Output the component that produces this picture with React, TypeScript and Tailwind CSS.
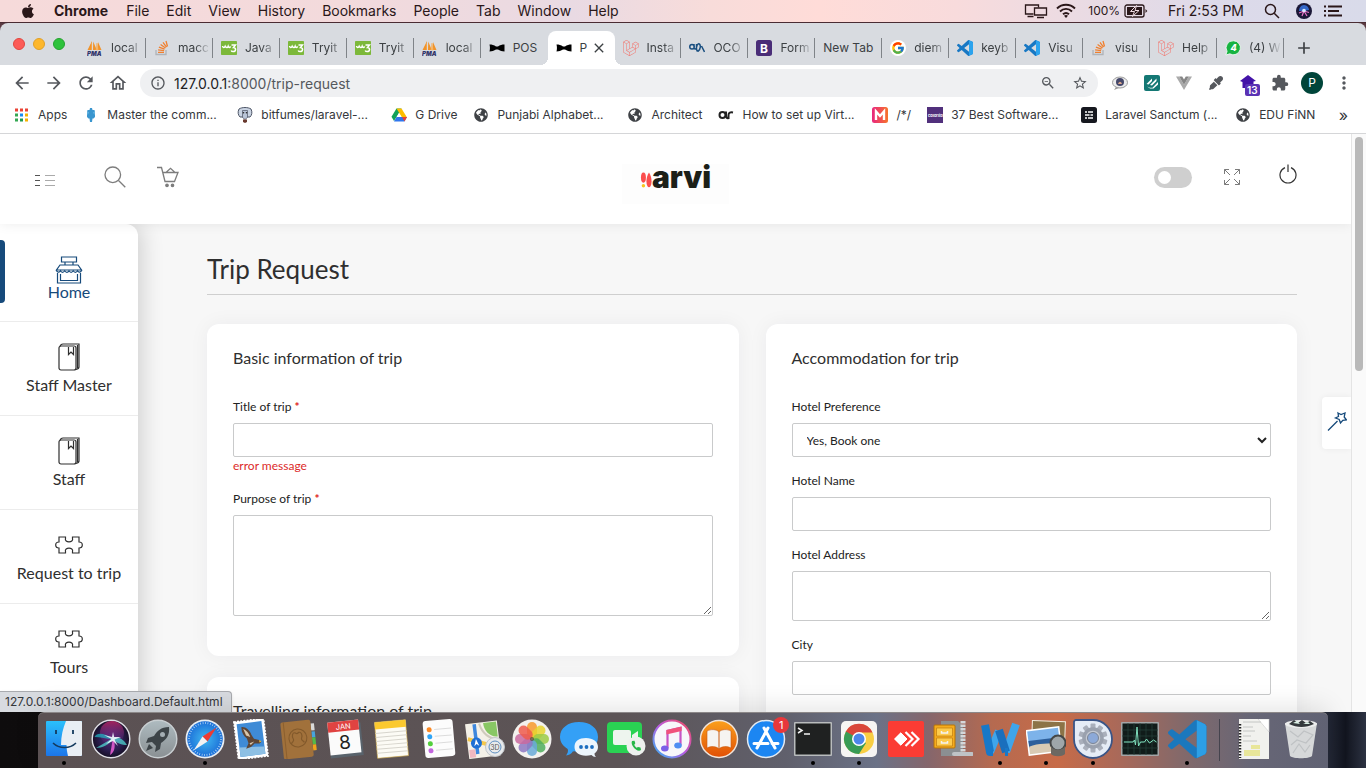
import React from "react";
import { FaApple, FaLaravel, FaEyeDropper, FaGlobeAmericas } from "react-icons/fa";
import { FcGoogle } from "react-icons/fc";
import {
  MdArrowBack,
  MdArrowForward,
  MdRefresh,
  MdOutlineHome,
  MdInfoOutline,
  MdZoomOut,
  MdStarBorder,
  MdMoreVert,
  MdExtension,
  MdAdd,
  MdClose,
} from "react-icons/md";

/* ---------- Small favicons ---------- */

const VSCODE_PATH =
  "M23.15 2.587L18.21.21a1.494 1.494 0 0 0-1.705.29l-9.46 8.63-4.12-3.128a.999.999 0 0 0-1.276.057L.327 7.261A1 1 0 0 0 .326 8.74L3.899 12 .326 15.26a1 1 0 0 0 .001 1.479L1.65 17.94a.999.999 0 0 0 1.276.057l4.12-3.128 9.46 8.63a1.492 1.492 0 0 0 1.704.29l4.942-2.377A1.5 1.5 0 0 0 24 20.06V3.939a1.5 1.5 0 0 0-.85-1.352zm-5.146 14.861L10.826 12l7.178-5.448v10.896z";

function PmaIcon() {
  return (
    <svg viewBox="0 0 16 16" className="size-4">
      <path d="M5 1 .5 10H5zM6.200 1.500 6 10h3.800zM11 2l-.5 8h4z" fill="#f0932b" />
      <path d="M4.500 3v7M10 3l1 7H9z" stroke="#f6b05e" strokeWidth=".6" fill="#f9b661" />
      <text x="0" y="15.500" fontSize="6" fontWeight="900" fontStyle="italic" fontFamily="Inter, sans-serif" fill="#33366b">
        PMA
      </text>
    </svg>
  );
}

function StackIcon() {
  return (
    <svg viewBox="0 0 16 16" className="size-4" fill="none">
      <path d="M2 10v4.500h10V10" stroke="#b0b3b8" strokeWidth="1.300" />
      <path d="M4 12.300h6M4.100 9.900l6 .8M4.900 7.200l5.700 2M6.600 4.500l4.900 3.500M9 2.300l3.500 4.800M12 1l1.500 5.500" stroke="#f08030" strokeWidth="1.300" />
    </svg>
  );
}

function W3Icon() {
  return (
    <svg viewBox="0 0 16 16" className="size-4">
      <rect y="1" width="16" height="14" rx=".8" fill="#7cb83a" />
      <path d="M1.500 6c.3 2 2 2 2.700.3C5 8 6.600 8 7.200 6.200c.6 1.700 2 1.500 2.400.2" stroke="#fff" strokeWidth="1.500" fill="none" />
      <path d="M10.500 5h4l-2 2.600c3 0 2.500 4-.3 4-1 0-1.700-.4-2-1.200" stroke="#fff" strokeWidth="1.500" fill="none" />
    </svg>
  );
}

function BowIcon() {
  return (
    <svg viewBox="0 0 16 16" className="size-4">
      <path d="M.5 4.500C3 4.500 5 5 7 6.500h2C11 5 13 4.500 15.500 4.500v7c-2.500 0-4.500-.7-6.500-2H7c-2 1.300-4 2-6.500 2 .6-2.500.6-4.500 0-7z" fill="#000" />
    </svg>
  );
}

function OcoIcon() {
  return (
    <svg viewBox="0 0 16 16" className="size-4" fill="none" stroke="#1a4f80" strokeWidth="1.500">
      <path d="M3 4.500c-3 0-3 4.500 0 4.500s3-4.500 0-4.500zM5 4v3.500c0 2 2.500 2 2.500 0V4M9.500 3.500c-2.500 2-2.500 6-1 8M9.500 3.500c3 1 2 6-.5 8M12.500 6l3 6" />
    </svg>
  );
}

function BootIcon() {
  return (
    <svg viewBox="0 0 16 16" className="size-4">
      <rect width="16" height="16" rx="2.500" fill="#4a2d78" />
      <text x="4" y="12.500" fontSize="12" fontWeight="700" fontFamily="Inter, sans-serif" fill="#fff">B</text>
    </svg>
  );
}

function CodeIcon() {
  return (
    <svg viewBox="0 0 24 24" className="size-4">
      <path d={VSCODE_PATH} fill="#1878c4" />
      <path d="M18 .2 23.200 2.600 24 4v16l-.8 1.400L18 23.800z" fill="#2ba3ee" />
    </svg>
  );
}

function ChatBadgeIcon() {
  return (
    <svg viewBox="0 0 16 16" className="size-4">
      <path d="M8.500.8a7 7 0 1 1-3.700 13L.8 15l1.300-3.600A7 7 0 0 1 8.500.8z" fill="#17b341" stroke="#fff" strokeWidth=".8" />
      <text x="5.500" y="11.300" fontSize="9" fontWeight="800" fontStyle="italic" fontFamily="Inter, sans-serif" fill="#fff">4</text>
    </svg>
  );
}

function GoogleIcon() {
  return (
    <span className="flex size-4 items-center justify-center rounded-full bg-white">
      <FcGoogle className="size-3.5" />
    </span>
  );
}

type Tab = { text: string; icon?: React.ReactNode; active?: boolean; noLine?: boolean };

const tabs: Tab[] = [
  { text: "local", icon: <PmaIcon /> },
  { text: "macc", icon: <StackIcon /> },
  { text: "Java", icon: <W3Icon /> },
  { text: "Tryit", icon: <W3Icon /> },
  { text: "Tryit", icon: <W3Icon /> },
  { text: "local", icon: <PmaIcon /> },
  { text: "POS", icon: <BowIcon />, noLine: true },
  { text: "P", icon: <BowIcon />, active: true, noLine: true },
  { text: "Insta", icon: <FaLaravel className="size-4 text-[#f3736b]" /> },
  { text: "OCO", icon: <OcoIcon /> },
  { text: "Form", icon: <BootIcon /> },
  { text: "New Tab" },
  { text: "diem", icon: <GoogleIcon /> },
  { text: "keyb", icon: <CodeIcon /> },
  { text: "Visu", icon: <CodeIcon /> },
  { text: "visu", icon: <StackIcon /> },
  { text: "Help", icon: <FaLaravel className="size-4 text-[#f3736b]" /> },
  { text: "(4) W", icon: <ChatBadgeIcon /> },
];

/* ---------- Menu bar ---------- */

const menus = ["File", "Edit", "View", "History", "Bookmarks", "People", "Tab", "Window", "Help"];

function MenuBar() {
  return (
    <header className="flex h-[23px] shrink-0 items-center border-b border-[#4a2c33] bg-[linear-gradient(90deg,#f6dada_0%,#f3dadc_25%,#e9dae3_42%,#f8dcda_52%,#ffdcd8_60%,#f8dbdc_70%,#e9dbe4_80%,#dcdaea_90%,#d9dbea_100%)] pr-6 pl-5 text-sm leading-none text-[#2a1719]">
      <button aria-label="Apple menu" className="mr-[18px]"><FaApple className="size-4" /></button>
      <nav className="flex gap-[17px]">
        <button className="mr-px font-bold">Chrome</button>
        {menus.map((m) => (
          <button key={m}>{m}</button>
        ))}
      </nav>
      <div className="ml-auto flex items-center">
        <svg viewBox="0 0 24 16" className="mr-2 h-4 w-6" fill="none" stroke="#2a1719" strokeWidth="1.300">
          <path d="M9.500 11H1.500V2h13v2.500M3.500 13.500h6" />
          <path d="M10.500 5h12v7h-12zM13 14.500h7" />
        </svg>
        <svg viewBox="0 0 20 16" className="mr-3 h-4 w-5" fill="none" stroke="#2a1719" strokeWidth="1.900">
          <path d="M1 5.500c5-5 13-5 18 0M4 8.500c3.500-3.500 8.500-3.500 12 0M7 11.300c2-1.800 4-1.800 6 0" />
          <path d="M10 15l-2-2.200c1.200-1 2.800-1 4 0z" fill="#2a1719" stroke="none" />
        </svg>
        <span className="mr-1 text-xs">100%</span>
        <svg viewBox="0 0 24 14" className="mr-5 h-3.5 w-6">
          <rect x="1" y="1" width="19" height="12" rx="2" fill="none" stroke="#2a1719" strokeWidth="1.300" />
          <path d="M3 3h15v8H3z" fill="#2a1719" />
          <path d="M21.500 5v4l1.800-2z" fill="#2a1719" />
          <path d="M12.500 1.500 6.500 7.500h4l-2 5 6.500-6h-4z" fill="#2a1719" stroke="#f0dce2" />
        </svg>
        <span className="mr-5">Fri 2:53 PM</span>
        <svg viewBox="0 0 16 16" className="mr-4 size-4" fill="none" stroke="#2a1719" strokeWidth="1.500">
          <circle cx="6.500" cy="6.500" r="5" />
          <path d="m10.200 10.200 4.800 4.800" />
        </svg>
        <svg viewBox="0 0 16 16" className="mr-3 size-4">
          <circle cx="8" cy="8" r="8" fill="#1b1838" />
          <path d="M8 2c3 0 5 3 5 5L8 8 3 8c0-3 2-6 5-6z" fill="#3467c8" />
          <path d="M8 8 3 10M8 8l3 5M8 8l-2 5M8 8l5 1.500" stroke="#e774c8" strokeWidth="1.200" />
          <circle cx="8" cy="7.500" r="1.800" fill="#d9ecff" />
        </svg>
        <svg viewBox="0 0 18 14" className="h-3.5 w-[18px]" stroke="#2a1719" strokeWidth="1.800">
          <path d="M0 2.500h2M4 2.500h14M0 7h2M4 7h11M0 11.500h2M4 11.500h14" />
        </svg>
      </div>
    </header>
  );
}

/* ---------- Tab strip ---------- */

function TabStrip() {
  return (
    <div className="flex h-[42px] shrink-0 rounded-t-lg bg-[#d8dbe0] pr-[52px]">
      <div className="flex w-[79px] shrink-0 items-start gap-2 pt-[15px] pl-[13px]">
        <button aria-label="Close window" className="size-3 rounded-full border border-[#e2463f] bg-[#fc5b57]" />
        <button aria-label="Minimise window" className="size-3 rounded-full border border-[#e0a028] bg-[#fdb72c]" />
        <button aria-label="Zoom window" className="size-3 rounded-full border border-[#25a22f] bg-[#2ec23c]" />
      </div>
      <div role="tablist" className="flex min-w-0 flex-1 pt-2">
        {tabs.map((t, i) => (
          <button
            key={i}
            role="tab"
            aria-selected={!!t.active}
            className={
              t.active
                ? "relative flex min-w-0 flex-1 items-center rounded-t-lg bg-white pl-2 text-xs text-[#3c4043] before:absolute before:bottom-0 before:-left-2 before:size-2 before:bg-[radial-gradient(circle_at_0_0,transparent_8px,white_8px)] after:absolute after:-right-2 after:bottom-0 after:size-2 after:bg-[radial-gradient(circle_at_100%_0,transparent_8px,white_8px)]"
                : "flex min-w-0 flex-1 items-center pl-2 text-xs text-[#3c4043]"
            }
          >
            {t.icon && <span className="mr-2 flex size-4 shrink-0 items-center">{t.icon}</span>}
            <span
              className={
                t.icon && !t.active && t.text !== "POS"
                  ? "min-w-0 flex-1 text-left whitespace-nowrap [mask-image:linear-gradient(to_right,black_50%,transparent_95%)]"
                  : "min-w-0 flex-1 text-left whitespace-nowrap"
              }
            >
              {t.text}
            </span>
            {t.active && <MdClose className="mr-2 size-4 shrink-0" />}
            {!t.active && !t.noLine && <span className="h-5 w-px shrink-0 bg-[#7f8388]" />}
          </button>
        ))}
      </div>
      <button aria-label="New tab" className="mt-2 ml-2.5 flex items-center text-[#3c4043]">
        <MdAdd className="size-5" />
      </button>
    </div>
  );
}

/* ---------- Address bar ---------- */

function ToolSlot({ label, children }: { label: string; children: React.ReactNode }) {
  return (
    <button aria-label={label} className="flex w-8 shrink-0 items-center justify-center text-[#55585d]">
      {children}
    </button>
  );
}

function Toolbar() {
  return (
    <div className="flex h-9 shrink-0 items-center bg-white px-1.5">
      <ToolSlot label="Back"><MdArrowBack className="size-5" /></ToolSlot>
      <ToolSlot label="Forward"><MdArrowForward className="size-5" /></ToolSlot>
      <ToolSlot label="Reload"><MdRefresh className="size-5" /></ToolSlot>
      <ToolSlot label="Home page"><MdOutlineHome className="size-5" /></ToolSlot>
      <div className="mr-1.5 ml-1.5 flex h-7 min-w-0 flex-1 items-center rounded-full bg-[#eff0f2] pr-2.5 pl-2.5 text-[#55585d]">
        <MdInfoOutline className="mr-2 size-4 shrink-0" />
        <span className="flex-1 pt-px text-sm">
          <span className="text-[#202124]">127.0.0.1</span>:8000/trip-request
        </span>
        <button aria-label="Page zoom" className="mr-4"><MdZoomOut className="size-4" /></button>
        <button aria-label="Bookmark this page"><MdStarBorder className="size-4" /></button>
      </div>
      <ToolSlot label="Chat extension">
        <svg viewBox="0 0 16 16" className="size-4">
          <ellipse cx="8" cy="7.500" rx="7.500" ry="5.500" fill="#ececec" stroke="#9a9a9a" />
          <path d="m4 12-2 3 5-2z" fill="#9a9a9a" />
          <circle cx="8" cy="7" r="4" fill="#45486a" />
          <path d="M6 9c1-3 3-3 4 0z" fill="#d8a58c" />
        </svg>
      </ToolSlot>
      <ToolSlot label="Notes extension">
        <svg viewBox="0 0 16 16" className="size-4">
          <rect width="16" height="16" rx="2" fill="#147874" />
          <path d="M2.500 9 8 3.500V6L4.500 9.500zM6 10l6.500-6.500V6L8 10.500zM3 11.500l3 1.300h2.500L14 7v2.500l-4.500 4H6z" fill="#fff" />
        </svg>
      </ToolSlot>
      <ToolSlot label="Vue extension">
        <svg viewBox="0 0 16 16" className="size-4">
          <path d="M0 1.500h3.200L8 9.800l4.800-8.300H16L8 15z" fill="#aaa" />
          <path d="M3.200 1.500h3L8 4.600l1.800-3.100h3L8 9.800z" fill="#858585" />
        </svg>
      </ToolSlot>
      <ToolSlot label="Colour picker"><FaEyeDropper className="size-3.5 text-[#55585d]" /></ToolSlot>
      <ToolSlot label="Tasks extension">
        <span className="relative">
          <svg viewBox="0 0 18 18" className="size-[18px]">
            <path d="m9 1 8 6-2.500.5V14H3.500V8L1 7z" fill="#4313a8" />
          </svg>
          <span className="absolute top-2.5 left-1.5 rounded-xs bg-[#5a32b4] px-0.5 text-[10px] leading-3 font-semibold text-white">13</span>
        </span>
      </ToolSlot>
      <ToolSlot label="Extensions"><MdExtension className="size-[18px]" /></ToolSlot>
      <ToolSlot label="Profile">
        <span className="flex size-[22px] items-center justify-center rounded-full bg-[#00453a] text-xs text-white">P</span>
      </ToolSlot>
      <ToolSlot label="Browser menu"><MdMoreVert className="size-5" /></ToolSlot>
    </div>
  );
}

/* ---------- Bookmarks ---------- */

function AppsIcon() {
  const colors = ["#ea4335", "#ea4335", "#ea4335", "#34a853", "#1a8cf0", "#f6b100", "#34a853", "#1e9a50", "#f6b100"];
  return (
    <svg viewBox="0 0 14 14" className="size-3.5">
      {colors.map((c, i) => (
        <rect key={i} x={(i % 3) * 5} y={Math.floor(i / 3) * 5 + 0.5} width="3" height="3" fill={c} />
      ))}
    </svg>
  );
}

function DriveIcon() {
  return (
    <svg viewBox="0 0 16 16" className="size-4">
      <path d="M5.500 1.500h5L5.500 10 3 14 .5 9.800z" fill="#12a15a" />
      <path d="M5.500 1.500h5L16 10.500h-5z" fill="#fdbd00" />
      <path d="M5.500 10H16l-2.500 4.500H3z" fill="#2f76ee" />
      <path d="M11 10h5l-2.500 4.500z" fill="#e94336" />
      <path d="M8 6.300 10.300 10H5.800z" fill="#fff" />
    </svg>
  );
}

type Mark = { text: string; icon: React.ReactNode; wide?: boolean };

const globe = <FaGlobeAmericas className="size-3.5 text-[#3f4246]" />;

const marks: Mark[] = [
  { text: "Apps", icon: <AppsIcon /> },
  {
    text: "Master the comm...",
    wide: true,
    icon: (
      <svg viewBox="0 0 16 16" className="size-4">
        <path d="M7 1h2l.5 2h2l.5 2.500V10l-1.500 1.500h-1L9 15H7l-.5-3.500h-1L4 10V5.500L4.500 3h2z" fill="#3a96cf" />
        <path d="m4 4.500 2 1L4.500 8zM12 4.500l-2 1L11.500 8z" fill="#6bb9e4" />
      </svg>
    ),
  },
  {
    text: "bitfumes/laravel-...",
    wide: true,
    icon: (
      <svg viewBox="0 0 16 16" className="size-4">
        <path d="M2 2c3-2 9-2 12 0 1.500 3 1 6-1 8H3C1 8 .5 5 2 2z" fill="#c9d3e2" stroke="#4d5566" />
        <path d="M5.500 3.500h5v7l-2.500 2-2.500-2z" fill="#b8c3d6" stroke="#4d5566" strokeWidth=".7" />
        <circle cx="6.500" cy="5.800" r=".8" fill="#222" />
        <circle cx="9.500" cy="5.800" r=".8" fill="#222" />
        <path d="M6 12.500h4v2.500l-2 1-2-1z" fill="#69392e" />
      </svg>
    ),
  },
  { text: "G Drive", icon: <DriveIcon /> },
  { text: "Punjabi Alphabet...", wide: true, icon: globe },
  { text: "Architect", icon: globe },
  {
    text: "How to set up Virt...",
    wide: true,
    icon: (
      <svg viewBox="0 0 16 16" className="size-4" fill="none" stroke="#222" strokeWidth="2">
        <circle cx="4.500" cy="8" r="3" />
        <path d="M8 4.500v4c0 2 1 3 2.500 2.500M10.500 12V8c0-2.500 2-3 4.500-2.500" />
      </svg>
    ),
  },
  {
    text: "/*/",
    icon: (
      <svg viewBox="0 0 16 16" className="size-4">
        <defs>
          <linearGradient id="mk" x2="1" y2="0">
            <stop stopColor="#e8267f" />
            <stop offset="1" stopColor="#f7742b" />
          </linearGradient>
        </defs>
        <rect width="16" height="16" rx="2.500" fill="url(#mk)" />
        <path d="M4 13V4.500l4 4.500 4-4.500V13" stroke="#fff" strokeWidth="2.400" fill="none" />
      </svg>
    ),
  },
  {
    text: "37 Best Software...",
    wide: true,
    icon: (
      <svg viewBox="0 0 16 16" className="size-4">
        <rect width="16" height="16" fill="#51307c" />
        <text x="1" y="9.500" fontSize="4" fontFamily="Inter, sans-serif" fontWeight="700" fill="#fff">colorlib</text>
      </svg>
    ),
  },
  {
    text: "Laravel Sanctum (...",
    wide: true,
    icon: (
      <svg viewBox="0 0 16 16" className="size-4">
        <rect width="16" height="16" rx="2.500" fill="#16181f" />
        <path d="M4 5h2M7 5h5M4 8h4.500M9.500 8H12M4 11h2M7 11h5" stroke="#fff" strokeWidth="1.400" />
      </svg>
    ),
  },
  { text: "EDU FiNN", icon: globe },
];

function BookmarksBar() {
  return (
    <nav aria-label="Bookmarks" className="flex h-[33px] shrink-0 items-center overflow-hidden border-b border-[#d5d6d8] bg-white pr-[18px] pb-1 pl-3.5 text-xs text-[#35373b]">
      {marks.map((m, i) => (
        <a
          key={i}
          href="#bookmark"
          className={m.wide ? "flex w-[154px] shrink-0 items-center gap-2 whitespace-nowrap" : "flex shrink-0 items-center gap-2 pr-4 whitespace-nowrap"}
        >
          <span className="flex size-4 shrink-0 items-center justify-center">{m.icon}</span>
          {m.text}
        </a>
      ))}
      <button aria-label="More bookmarks" className="ml-auto text-base leading-none">»</button>
    </nav>
  );
}

/* ---------- Web page ---------- */

function PageHeader() {
  return (
    <header className="relative z-10 grid h-[90px] shrink-0 grid-cols-[1fr_auto_1fr] items-center bg-white pr-[54px] pb-1 pl-[34px] shadow-[0_0_12px_rgba(0,0,0,0.08)]">
      <div className="flex items-center">
        <button aria-label="Toggle menu" className="mt-1.5 mr-12">
          <svg viewBox="0 0 22 14" className="h-3.5 w-[22px]" strokeWidth="1">
            <path d="M1 2.500h5M1 7.500h5M1 12.500h5" stroke="#555" />
            <path d="M11 2.500h10M11 7.500h10M11 12.500h10" stroke="#aaa" />
          </svg>
        </button>
        <button aria-label="Search" className="mr-[31px]">
          <svg viewBox="0 0 22 22" className="size-[22px]" fill="none" stroke="#7d7d7d" strokeWidth="1.300">
            <circle cx="8.800" cy="8.800" r="7.800" />
            <path d="m14.500 14.500 6.800 6.800" />
          </svg>
        </button>
        <button aria-label="Cart">
          <svg viewBox="0 0 22 22" className="size-[22px]" fill="none" stroke="#7d7d7d" strokeWidth="1.300">
            <path d="M0 1.500h4.500l3.500 14h9.500L21 6.500H6M9 6.500l4.500-4.200L18 6.500" />
            <circle cx="10" cy="19.300" r="1.200" fill="#7d7d7d" />
            <circle cx="15.500" cy="19.300" r="1.200" fill="#7d7d7d" />
          </svg>
        </button>
      </div>
      <a href="#home" className="mt-3.5 ml-5 flex h-10 w-[107px] items-start justify-center bg-[#fdfdfd]">
        <svg viewBox="0 0 14 20" className="mt-2 h-[18px] w-3">
          <ellipse cx="4" cy="6" rx="2.900" ry="6" fill="#fb4d4d" />
          <path d="M10.500 0c2 3 3 7 3 10.500 0 9-6 9-6 0C7.500 7 8.500 3 10.500 0z" fill="#fb4d4d" />
          <circle cx="4" cy="15.500" r="2" fill="#f7c51e" />
        </svg>
        <span className="-mt-0.5 text-[30px] leading-[30px] font-black text-[#1c2018] font-[Inter]">arvi</span>
      </a>
      <div className="flex items-center justify-end">
        <input
          type="checkbox"
          aria-label="Dark mode"
          className="relative h-[21px] w-[38px] appearance-none rounded-full bg-[#cfcfcf] before:absolute before:top-1 before:left-1 before:size-[13px] before:rounded-full before:bg-white"
        />
        <button aria-label="Full screen" className="ml-8">
          <svg viewBox="0 0 16 16" className="size-4" fill="none" stroke="#7b7b7b">
            <path d="M.5 5V.5H5M11 .5h4.500V5M15.500 11v4.500H11M5 15.500H.5V11M.5.5 6 6M15.500.500 10 6M15.500 15.500 10 10M.5 15.500 6 10" />
          </svg>
        </button>
        <button aria-label="Log out" className="mb-1.5 ml-[39px]">
          <svg viewBox="0 0 18 20" className="h-5 w-[18px]" fill="none" stroke="#333" strokeWidth="1.200">
            <path d="M6 3.600a8 8 0 1 0 6 0M9 .5v7.500" />
          </svg>
        </button>
      </div>
    </header>
  );
}

const iconStroke = { fill: "none", stroke: "currentColor", strokeWidth: 1.2 };

function StoreIcon() {
  return (
    <svg viewBox="0 0 28 28" className="size-7" {...iconStroke}>
      <path d="M6.500 1h15v5h-15zM10 6v3M18 6v3M5 9h18l3.500 5H1.500zM2.500 17v10h23V17M5.500 18v6.500h17V18" />
      <path d="M1.500 14c0 2.500 3 3 4 .8 1 2 3 2 4.200 0 1.200 2 3 2 4.300 0 1.200 2 3 2 4.200 0 1.200 2 3.200 2 4.300 0 1 2.200 4 1.700 4-.8" />
    </svg>
  );
}

function BookIcon() {
  return (
    <svg viewBox="0 0 28 28" className="size-7" {...iconStroke}>
      <rect x="4" y="3" width="17" height="24" rx="2" />
      <path d="M5 3.500C5.500 1.500 6.500 1 8 1h16v23c0 1.500-1 2-3 2.500M22.500 2v23M13.500 4v7.500l2.500-2.500 2.500 2.500V4" />
    </svg>
  );
}

function PuzzleIcon() {
  return (
    <svg viewBox="0 0 28 28" className="size-7" {...iconStroke}>
      <path d="M4 6h6.500v1.500c-1.500 4.500 8.500 4.500 7 0V6H24v5c1.500 0 3.300.8 3.300 3S25.500 17 24 17v5h-6.500v-1.500c1.500-4.500-8.500-4.500-7 0V22H4v-5C2.500 17 .7 16.200.7 14S2.500 11 4 11z" />
    </svg>
  );
}

const navItems = [
  { label: "Staff Master", icon: <BookIcon /> },
  { label: "Staff", icon: <BookIcon /> },
  { label: "Request to trip", icon: <PuzzleIcon /> },
  { label: "Tours", icon: <PuzzleIcon /> },
];

function Sidebar() {
  return (
    <aside className="w-[138px] shrink-0 rounded-tr-xl bg-white text-base leading-5 text-[#2f2f2f] shadow-[4px_0_22px_rgba(0,0,0,0.16)]">
      <a href="#home" className="relative flex h-[98px] flex-col items-center border-b border-[#ececec] pt-8 leading-4 text-[#164a7b] before:absolute before:top-4 before:left-0 before:h-[63px] before:w-[5px] before:rounded-r-sm before:bg-[#164a7b]">
        <StoreIcon />
        Home
      </a>
      {navItems.map((n) => (
        <a key={n.label} href="#section" className="flex h-[94px] flex-col items-center gap-1 border-b border-[#ececec] pt-[21px]">
          {n.icon}
          {n.label}
        </a>
      ))}
    </aside>
  );
}

const fieldLabel = "mb-[7px] block text-xs leading-[18px] text-[#222]";
const fieldBox = "block w-full rounded-xs border border-[#c9cacb] bg-white px-2.5 text-xs text-[#222]";
const cardBox = "rounded-xl bg-white px-[26px] pt-6 pb-[25px] shadow-[0_0_20px_rgba(8,21,66,0.05)]";
const cardTitle = "mb-[30px] text-base leading-5 text-[#2f2f2f]";

function Star() {
  return <span className="font-bold text-[#e02020]">*</span>;
}

function TripPage() {
  return (
    <main className="min-w-0 flex-1 pr-[54px] pl-[69px]">
      <h1 className="mb-[29px] border-b border-[#cfcfcf] pt-[29px] pb-2 text-[26px] leading-[33px] text-[#2f2f2f]">Trip Request</h1>
      <form className="grid grid-cols-2 gap-x-[27px]">
        <div className="flex flex-col gap-[21px]">
          <section className={cardBox}>
            <h2 className={cardTitle}>Basic information of trip</h2>
            <div className="mb-[15px]">
              <label htmlFor="title" className={fieldLabel}>Title of trip <Star /></label>
              <input id="title" className={`${fieldBox} h-[34px]`} />
              <p className="text-xs leading-[18px] text-[#dc2a2a]">error message</p>
            </div>
            <div className="mb-[15px]">
              <label htmlFor="purpose" className={fieldLabel}>Purpose of trip <Star /></label>
              <textarea id="purpose" className={`${fieldBox} h-[101px]`} />
            </div>
          </section>
          <section className={cardBox}>
            <h2 className={cardTitle}>Travelling information of trip</h2>
          </section>
        </div>
        <section className={cardBox}>
          <h2 className={cardTitle}>Accommodation for trip</h2>
          <div className="mb-[15px]">
            <label htmlFor="hotel-pref" className={fieldLabel}>Hotel Preference</label>
            <select id="hotel-pref" className={`${fieldBox} h-[34px]`}>
              <option>Yes, Book one</option>
            </select>
          </div>
          <div className="mb-[15px]">
            <label htmlFor="hotel-name" className={fieldLabel}>Hotel Name</label>
            <input id="hotel-name" className={`${fieldBox} h-[34px]`} />
          </div>
          <div className="mb-[15px]">
            <label htmlFor="hotel-address" className={fieldLabel}>Hotel Address</label>
            <textarea id="hotel-address" className={`${fieldBox} h-[50px]`} />
          </div>
          <div className="mb-[15px]">
            <label htmlFor="city" className={fieldLabel}>City</label>
            <input id="city" className={`${fieldBox} h-[34px]`} />
          </div>
        </section>
      </form>
    </main>
  );
}

function WebPage() {
  return (
    <div className="relative flex min-h-0 flex-1 overflow-hidden bg-[#f7f7f7] font-[Lato,sans-serif]">
      <div className="relative flex min-w-0 flex-1 flex-col overflow-hidden">
        <PageHeader />
        <div className="flex min-h-0 flex-1">
          <Sidebar />
          <TripPage />
        </div>
        <button aria-label="Customise" className="absolute top-[263px] right-0 flex h-[52px] w-[29px] justify-center rounded-l bg-white pt-3.5 text-[#164a7b] shadow-[0_0_6px_rgba(0,0,0,0.06)]">
          <svg viewBox="0 0 20 20" className="size-5" fill="none" stroke="currentColor" strokeWidth="1.300">
            <path d="M1 19.500 10.500 10M11 2l3 1.500L18 2l-.8 4 2.300 3-3.700.3L13.500 12l-1.300-3.500L8.500 7l3-1.500z" />
          </svg>
        </button>
      </div>
      <div className="w-[15px] shrink-0 border-l border-[#e4e4e4] bg-[#fafafa] px-[3px] pt-[3px]">
        <div className="h-[234px] w-2 rounded-full bg-[#b9b9b9]" />
      </div>
      <div className="absolute bottom-0 left-0 rounded-tr border-t border-r border-[#a9abaf] bg-[#d8dbe0] pr-2 pl-[5px] font-[Inter,sans-serif] text-xs leading-5 text-[#35373b] shadow">
        127.0.0.1:8000/Dashboard.Default.html
      </div>
    </div>
  );
}

/* ---------- Dock ---------- */

function DockSvg({ children }: { children: React.ReactNode }) {
  return <svg viewBox="0 0 40 40" className="size-10">{children}</svg>;
}

function Petals() {
  const c = ["#f79a2c", "#e8d52e", "#9bcb45", "#4fae5d", "#69aad8", "#8d78c2", "#c9689f", "#ee5b4c"];
  return (
    <>
      {c.map((f, i) => (
        <rect key={i} x="15" y="3" width="10" height="16" rx="5" fill={f} opacity=".85" transform={`rotate(${i * 45} 20 20)`} />
      ))}
      <circle cx="20" cy="20" r="2" fill="#5b4a33" opacity=".8" />
    </>
  );
}

function CompassTicks() {
  return <circle cx="20" cy="20" r="16" fill="none" stroke="#e7f6ff" strokeWidth="2" strokeDasharray=".8 1.700" opacity=".7" />;
}

const gear = Array.from({ length: 10 }, (_, i) => (
  <rect key={i} x="17.500" y="4.500" width="5" height="6" rx="1" fill="#a9afbb" transform={`rotate(${i * 36} 20 19)`} />
));

type DockItem = { name: string; dot?: boolean; art: React.ReactNode };

const dockApps: DockItem[] = [
  {
    name: "Finder",
    dot: true,
    art: (
      <>
        <defs>
          <linearGradient id="fnd" x2="0" y2="1"><stop stopColor="#2bc0fb" /><stop offset="1" stopColor="#1c75ea" /></linearGradient>
        </defs>
        <rect x="2" y="2" width="36" height="35" rx="1" fill="url(#fnd)" />
        <path d="M22 2h15a1 1 0 0 1 1 1v33a1 1 0 0 1-1 1H24c-1-4-1.500-8-1.500-11H17c0-9 2-17 5-24z" fill="#e9eef4" />
        <path d="M12 11v4M29 11v4" stroke="#143a5e" strokeWidth="1.800" />
        <path d="M9 24c6 6 17 6 23 0" fill="none" stroke="#143a5e" strokeWidth="1.500" />
      </>
    ),
  },
  {
    name: "Siri",
    art: (
      <>
        <defs>
          <radialGradient id="siri"><stop stopColor="#59257a" /><stop offset=".6" stopColor="#2c1e52" /><stop offset="1" stopColor="#160f24" /></radialGradient>
          <linearGradient id="sirip" x2="0" y2="1"><stop stopColor="#e02a72" stopOpacity=".7" /><stop offset="1" stopColor="#7b3bb0" stopOpacity="0" /></linearGradient>
        </defs>
        <circle cx="20" cy="20" r="18.800" fill="url(#siri)" stroke="#dfdfe6" strokeWidth="1.400" />
        <circle cx="21" cy="14" r="12" fill="url(#sirip)" />
        <path d="M22 20C12 13 6 14 3.500 18c6 0 12 2 18.500 2z" fill="#1fb6c4" opacity=".7" />
        <path d="M22 19 5 29c6 0 13-3 17-9zM22 19c6-2 11 2 14 7-5 0-11-2-14-6z" fill="#4fd6d2" opacity=".75" />
        <path d="m22 19-3 17c5-3 6-10 3-17z" fill="#d256c4" />
        <path d="m22 13 1.200 5L30 18l-6.500 2.500L27 27l-5-5-7 3 5.500-5L13 16l8 2z" fill="#f2fbff" opacity=".9" />
      </>
    ),
  },
  {
    name: "Launchpad",
    art: (
      <>
        <defs>
          <linearGradient id="lp" x2="0" y2="1"><stop stopColor="#aebbc0" /><stop offset="1" stopColor="#8a9093" /></linearGradient>
        </defs>
        <circle cx="20" cy="20" r="18.800" fill="url(#lp)" stroke="#c9cfd2" strokeWidth="1.400" />
        <path d="M31 8c-8 0-12 4-15 9l-6 2-2 5 6-1 4 4-1 6 5-3 1-6c5-3 9-8 8-16z" fill="#3d4448" />
        <circle cx="24.500" cy="15.500" r="2.500" fill="#a4aeb3" />
        <path d="m8 32 3-7 4 4z" fill="#3d4448" />
      </>
    ),
  },
  {
    name: "Safari",
    dot: true,
    art: (
      <>
        <defs>
          <radialGradient id="saf"><stop stopColor="#40b8f0" /><stop offset="1" stopColor="#1c6fd8" /></radialGradient>
        </defs>
        <circle cx="20" cy="20" r="19.500" fill="#e9eef2" />
        <circle cx="20" cy="20" r="17.800" fill="url(#saf)" />
        <CompassTicks />
        <path d="M31.500 8.500 17.500 17.500l5 5z" fill="#ee3b33" />
        <path d="m8.500 31.500 9-14 5 5z" fill="#f3f3f3" />
      </>
    ),
  },
  {
    name: "Mail",
    art: (
      <g transform="rotate(-7 20 20)">
        <rect x="5" y="1" width="30" height="38" fill="#fff" stroke="#fff" strokeWidth="1.500" strokeDasharray="2 1.200" />
        <rect x="7.500" y="3.500" width="25" height="33" fill="#3f8bd6" />
        <path d="m7.500 27 25 2v7.500h-25z" fill="#8ec0e4" />
        <path d="M12 7c4 0 8 4 9 9l2 4 5 2 2 2-2 1.500-5-.5-4 3-5 1 3-5-1-5c-3-3-5-7-4-12z" fill="#5e4636" />
        <path d="M13.500 9c3 2 5 5 6 9l-4-2zM18 24l5-1-4 3z" fill="#d9c6aa" />
        <path d="m28 22 2 1.500-2 1z" fill="#f3c33c" />
      </g>
    ),
  },
  {
    name: "Contacts",
    art: (
      <g transform="rotate(-6 20 20)">
        <path d="M34 6h3.500v7H34z" fill="#d9d9d9" />
        <path d="M34 14h3.500v6H34z" fill="#47a4dd" />
        <path d="M34 20h3.500v7H34z" fill="#54b948" />
        <path d="M34 27h3.500v6H34z" fill="#f0a41c" />
        <rect x="4" y="2" width="30" height="37" rx="2" fill="#a1713b" />
        <path d="M7 2v37" stroke="#8b5f2f" />
        <circle cx="20" cy="19" r="9" fill="none" stroke="#82592b" strokeWidth="1" />
        <path d="M13 24c1-2 3-2 2.500-4-2-4 0-7 2-6.500 1 .3 1 1 2 1 1 0 1-.7 2-1 2-.5 4 2.500 2 6.500-.5 2 1.500 2 2.500 4" fill="none" stroke="#82592b" strokeWidth="1.200" />
      </g>
    ),
  },
  {
    name: "Calendar",
    art: (
      <g transform="rotate(-6 20 20)">
        <path d="M6 5h31v33H4z" fill="#59636c" />
        <rect x="4" y="2" width="31" height="33" fill="#fbfbfb" />
        <path d="M4 2h31v10H4z" fill="#e04341" />
        <text x="19.500" y="10" textAnchor="middle" fontSize="7.500" fontFamily="Inter, sans-serif" fill="#fff">JAN</text>
        <text x="19.500" y="30" textAnchor="middle" fontSize="19" fontFamily="Inter, sans-serif" fill="#222">8</text>
      </g>
    ),
  },
  {
    name: "Notes",
    art: (
      <g transform="rotate(-5 20 20)">
        <rect x="4" y="2" width="31" height="36" fill="#fcfbf5" stroke="#d9b24c" strokeWidth=".6" />
        <path d="M4 2h31v7H4z" fill="#fbc92f" />
        <path d="M4 13h31M4 17h31M4 21h31M4 25h31M4 29h31M4 33h31" stroke="#d7d5cd" />
      </g>
    ),
  },
  {
    name: "Reminders",
    art: (
      <g transform="rotate(-5 20 20)">
        <rect x="5" y="1" width="30" height="37" rx="3" fill="#fcfcfc" />
        <circle cx="11" cy="10" r="2.500" fill="#fb8a26" />
        <circle cx="11" cy="17" r="2.500" fill="#2fa5f6" />
        <circle cx="11" cy="24" r="2.500" fill="#53cf3c" />
        <circle cx="11" cy="31" r="2.500" fill="#c265dd" />
        <path d="M16 10h17M16 17h17M16 24h17M16 31h17" stroke="#dcdcdc" />
      </g>
    ),
  },
  {
    name: "Maps",
    art: (
      <>
        <g transform="rotate(-7 20 20)">
          <rect x="2" y="3" width="32" height="35" fill="#f4f1e8" />
          <path d="M20 4h13v15c-8 0-13-7-13-15z" fill="#88c764" />
          <path d="M16 4c2 10 8 16 17 18" stroke="#cfcabd" strokeWidth="2" fill="none" />
          <path d="M3 18l30 12" stroke="#f5c84b" strokeWidth="4" fill="none" />
          <path d="M11 4v30" stroke="#3d87dd" strokeWidth="3.500" />
          <path d="M3 29h6v8H3z" fill="#f0b8c0" />
          <circle cx="11" cy="23" r="5.500" fill="#1e6fd4" />
          <path d="m11 19 2.500 7-2.500-2-2.500 2z" fill="#fff" />
        </g>
        <circle cx="30" cy="28" r="9.500" fill="#e8eaec" stroke="#c2c6ca" />
        <circle cx="30" cy="28" r="6" fill="none" stroke="#5e8fc0" />
        <text x="30" y="30.500" textAnchor="middle" fontSize="7" fontFamily="Inter, sans-serif" fill="#555">3D</text>
      </>
    ),
  },
  {
    name: "Photos",
    art: (
      <>
        <circle cx="20" cy="20" r="19.500" fill="#f3f1ee" />
        <Petals />
      </>
    ),
  },
  {
    name: "Messages",
    art: (
      <>
        <path d="M20 3c11 0 19 6 19 15s-8 15-19 15c-2 0-4 0-6-.7-1.500 2.500-4 4-7 4.200 1.500-2 2.500-4 1.700-6.500C4 27 1 23 1 18 1 9 9 3 20 3z" fill="#34a0f6" />
        <path d="M27 19c7 0 12 3.500 12 9 0 3-1.500 5-3.500 6.500 0 1.500.5 2.500 1.500 3.500-2 0-3.500-.8-4.500-2C22 38.500 15.500 34 15.500 28S20 19 27 19z" fill="#edf5fc" />
        <g fill="#1d6ec0">
          <circle cx="22" cy="28" r="1.900" />
          <circle cx="27.500" cy="28" r="1.900" />
          <circle cx="33" cy="28" r="1.900" />
        </g>
      </>
    ),
  },
  {
    name: "FaceTime",
    art: (
      <>
        <rect x="1" y="3" width="35" height="31" rx="4" fill="#2ad253" />
        <rect x="7" y="11" width="18" height="15" rx="2" fill="#eef5ee" />
        <path d="m26 16 6-4v12l-6-3z" fill="#eef5ee" />
        <circle cx="30" cy="27" r="9.500" fill="#eef1ee" />
        <path d="M26 22c-2 4 5 12 9 9l-.5-2.500-2.500-.5-1.500.7c-1-1-2-2-2.200-3l1-1.500-.8-2.500z" fill="#27b748" />
      </>
    ),
  },
  {
    name: "iTunes",
    art: (
      <>
        <defs>
          <linearGradient id="itr" x1="1" x2="0" y2="1"><stop stopColor="#f54a5a" /><stop offset=".5" stopColor="#b95be0" /><stop offset="1" stopColor="#2fb5f4" /></linearGradient>
        </defs>
        <circle cx="20" cy="20" r="18.500" fill="#f7f6fa" stroke="url(#itr)" strokeWidth="2" />
        <path d="M15.500 29V12l13-3v17" fill="none" stroke="#c653c5" strokeWidth="2.200" />
        <path d="M14.400 11l15.200-3.500v4.500l-15.200 3.500z" fill="#f0527c" />
        <ellipse cx="12.800" cy="29.500" rx="3.800" ry="3" fill="#7a60e8" />
        <ellipse cx="26" cy="26.500" rx="3.800" ry="3" fill="#4f8df2" />
      </>
    ),
  },
  {
    name: "Books",
    art: (
      <>
        <defs>
          <linearGradient id="bk" x2="0" y2="1"><stop stopColor="#fba01c" /><stop offset="1" stopColor="#e04f05" /></linearGradient>
        </defs>
        <circle cx="20" cy="20" r="18.500" fill="url(#bk)" stroke="#f0e4da" strokeWidth="1.500" />
        <path d="M20 13c-3-3-8-3-12-1v17c4-2 9-2 12 1zM20 13c3-3 8-3 12-1v17c-4-2-9-2-12 1z" fill="#f6f4f1" stroke="#c95a12" strokeWidth=".6" />
      </>
    ),
  },
  {
    name: "App Store",
    art: (
      <>
        <circle cx="20" cy="20" r="18.500" fill="#1c86f2" stroke="#e4ebf2" strokeWidth="1.500" />
        <path d="m22 9-11 20M18 9l11 20M8 24.500h14M26 24.500h6" stroke="#fff" strokeWidth="3" strokeLinecap="round" />
      </>
    ),
  },
  {
    name: "Terminal",
    dot: true,
    art: (
      <>
        <rect x="1" y="3" width="38" height="34" rx="1" fill="#b9bcbd" />
        <rect x="2.500" y="4.500" width="35" height="31" fill="#1f2121" />
        <path d="m5 9 4 2.500L5 14M11 15h6" stroke="#f2f2f2" strokeWidth="1.500" fill="none" />
      </>
    ),
  },
  {
    name: "Chrome",
    dot: true,
    art: (
      <>
        <rect x="2" y="2" width="36" height="36" rx="5" fill="#f6f5f3" />
        <circle cx="20" cy="20" r="15" fill="#f8ce43" />
        <path d="M20 20 6.500 13A15 15 0 0 1 33.500 13.500H20z" fill="#d9463a" />
        <path d="M20 20 7 12.500A15 15 0 0 0 20 35l7-11z" fill="#389b55" />
        <circle cx="20" cy="20" r="7" fill="#fff" />
        <circle cx="20" cy="20" r="5.500" fill="#4c86ea" />
      </>
    ),
  },
  {
    name: "AnyDesk",
    art: (
      <>
        <rect x="2" y="2" width="36" height="36" rx="2" fill="#fb3c34" />
        <path d="m15 13 7 7-7 7-7-7z" fill="#fff" />
        <path d="m19.500 13 7 7-7 7M25.500 13l7 7-7 7" stroke="#fff" strokeWidth="2.200" fill="none" />
        <path d="m15 13 7 7-7 7" fill="none" stroke="#fb3c34" />
      </>
    ),
  },
  {
    name: "Archiver",
    art: (
      <>
        <path d="M8 2h17l5 5v25l-5 5H8z" fill="#8b8f92" />
        <rect x="1" y="6" width="21" height="23" rx="1" fill="#f5ac1d" stroke="#b5730a" />
        <path d="M3.500 9h16v8h-16zM3.500 19h16v8h-16z" fill="#fdcb4c" stroke="#c07d10" strokeWidth=".7" />
        <path d="M8.500 12v2h6v-2M8.500 22v2h6v-2" fill="none" stroke="#f2f2f2" strokeWidth="1.500" />
        <path d="M30 2v34" stroke="#d5d8da" strokeWidth="5" strokeDasharray="2.500 1" />
        <path d="M21 35h18" stroke="#bfc3c6" strokeWidth="4" strokeLinecap="round" />
      </>
    ),
  },
  {
    name: "Word",
    dot: true,
    art: (
      <g fill="none" strokeWidth="8" strokeLinejoin="round">
        <path d="M26 33 36 5" stroke="#3fa5ea" />
        <path d="M10 33 19 12" stroke="#3fa5ea" />
        <path d="M19 11 26 33" stroke="#1a6fbd" />
        <path d="M5 6 10 33h3M25 33h3" stroke="#1878c8" />
      </g>
    ),
  },
  {
    name: "Preview",
    dot: true,
    art: (
      <>
        <path d="M6 2h33v24H6z" fill="#8c7347" stroke="#f3efe3" transform="rotate(2 20 14)" />
        <g transform="rotate(-7 18 22)">
          <rect x="1" y="9" width="34" height="26" fill="#fff" />
          <rect x="2.500" y="10.500" width="31" height="12" fill="#7db3ea" />
          <path d="M2.500 20h31v7h-31z" fill="#2d5f9b" />
          <path d="M2.500 26c10-3 20 0 31-1v8.500h-31z" fill="#d8cab3" />
        </g>
        <circle cx="32" cy="24" r="7.500" fill="#9fa6a9" stroke="#454747" strokeWidth="2" />
        <path d="M25 27c2 5 12 5 14 0v8c-3 3-11 3-14 0z" fill="#6c6862" />
      </>
    ),
  },
  {
    name: "Settings",
    dot: true,
    art: (
      <>
        <path d="M3 1h17a19 19 0 1 1-19 19V3a2 2 0 0 1 2-2z" fill="#e5ecf6" stroke="#3a5587" strokeWidth="1.800" />
        {gear}
        <circle cx="20" cy="19" r="9" fill="#c4c9d2" stroke="#9aa1ae" strokeWidth="3.500" />
        <circle cx="20" cy="19" r="5.500" fill="#8ca9d8" stroke="#7b8596" />
      </>
    ),
  },
  {
    name: "Activity Monitor",
    art: (
      <>
        <rect x="1" y="3" width="38" height="34" rx="1" fill="#a3a6a7" />
        <rect x="2.500" y="4.500" width="35" height="31" fill="#101c1a" />
        <path d="M2 11h36M2 17h36M2 23h36M2 29h36M8 4v32M14 4v32M20 4v32M26 4v32M32 4v32" stroke="#27443c" strokeWidth=".7" />
        <path d="M4 23h9l1.500-2 1 5 1.500-18 1.500 19 2-4h4l2-3 3 4 4-3 3 2" fill="none" stroke="#7fe0bd" />
      </>
    ),
  },
  {
    name: "Code",
    dot: true,
    art: (
      <g transform="translate(1 1) scale(1.600)">
        <path d={VSCODE_PATH} fill="#1b78bd" />
        <path d="M18 .2 23.200 2.600 24 4v16l-.8 1.400L18 23.800z" fill="#2c9fe6" />
      </g>
    ),
  },
];

function Dock() {
  return (
    <footer className="relative z-20 h-14 shrink-0 bg-[linear-gradient(90deg,#0e0c0d_0%,#141112_50%,#262b3a_97%,#12151f_98.500%,#2c3242_100%)] px-[38px]">
      <div className="flex h-full rounded-t-md border-t border-[#8b8788] bg-[linear-gradient(90deg,#5b5153_0%,#5c5456_45%,#60606c_58%,#6b7287_65%,#85666c_69%,#b56a50_74%,#c76b48_79%,#a8695a_84%,#81696b_89%,#676676_94%,#606273_100%)] px-[3px] shadow-[0_-6px_24px_rgba(0,0,0,0.10)]">
        {dockApps.map((a) => (
          <button key={a.name} aria-label={a.name} className="relative flex min-w-0 flex-1 flex-col items-center pt-1.5">
            <DockSvg>{a.art}</DockSvg>
            {a.name === "App Store" && (
              <span className="absolute top-1 right-0 flex size-4 items-center justify-center rounded-full bg-[#e8383b] text-[11px] text-white">1</span>
            )}
            {a.dot && <span className="mt-0.5 size-1 rounded-full bg-black" />}
          </button>
        ))}
        <div className="mx-[9px] mt-1.5 h-[42px] w-px shrink-0 bg-[#45434d]" />
        <button aria-label="Documents" className="flex w-12 shrink-0 justify-center pt-1.5">
          <DockSvg>
            <path d="M6 0h30v40H6z" fill="#f1f1ee" />
            <path d="M25 0h11v13z" fill="#fff" stroke="#c9c9c9" strokeWidth=".6" />
            <path d="M10 3h18M10 8h10M10 12h12M10 17h8M10 22h14" stroke="#c4c6c4" />
            <path d="M11 31h16v6H11zM18 26h9v4h-9z" fill="#e8e69a" />
            <path d="M7 5v34" stroke="#222" strokeWidth="2.500" strokeDasharray="1.500 1.500" />
          </DockSvg>
        </button>
        <button aria-label="Trash" className="flex w-12 shrink-0 justify-center pt-1.5">
          <DockSvg>
            <path d="m4 4 5 33c3 3 19 3 22 0l5-33z" fill="#d6d8d9" />
            <path d="m9 12 8 6 6-6 9 4-7 8-9-3-6 5M12 34l6-9 6 8 5-7" fill="none" stroke="#bfc2c4" strokeWidth="1.200" />
            <ellipse cx="20" cy="5" rx="16" ry="4" fill="#eceded" />
            <path d="m8 5 5-4 4 3 4-3 4 3 4-2 4 3c-8 4-17 4-25 0z" fill="#34393c" />
            <path d="m12 4 4-2 3 3zM22 5l5-2 2 2z" fill="#d9f0e4" />
          </DockSvg>
        </button>
      </div>
    </footer>
  );
}

export default function App() {
  return (
    <div className="flex h-screen flex-col overflow-hidden bg-[#5a3a42] font-[Inter,sans-serif]">
      <MenuBar />
      <TabStrip />
      <Toolbar />
      <BookmarksBar />
      <WebPage />
      <Dock />
    </div>
  );
}
